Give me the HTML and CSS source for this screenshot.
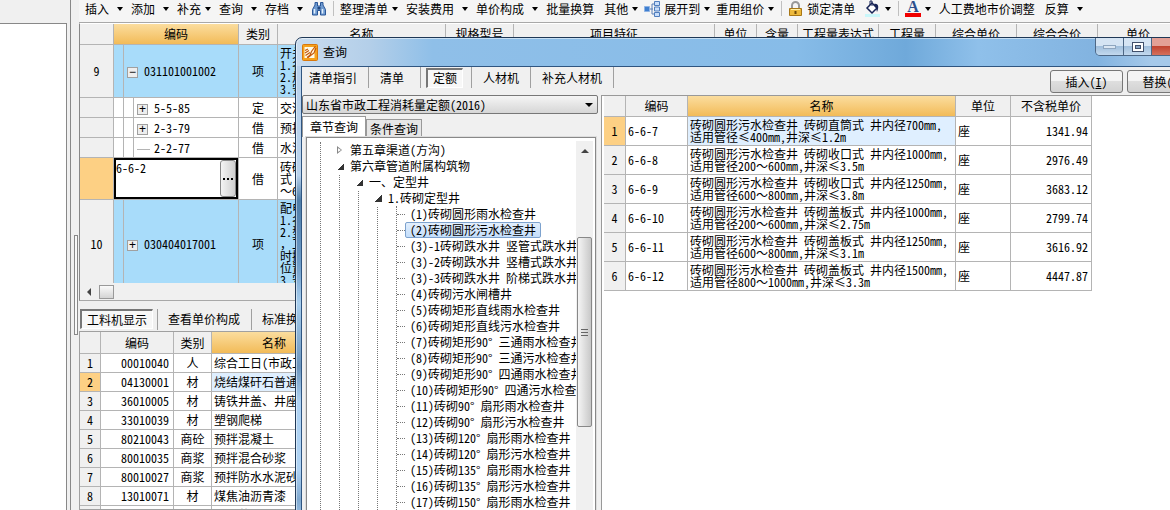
FILE: index.html
```html
<!DOCTYPE html>
<html lang="zh-CN">
<head>
<meta charset="utf-8">
<title>查询</title>
<link rel="stylesheet" href="styles.css">
</head>
<body>
<div class="app">
  <aside class="side"><div class="side-body"></div></aside>
  <div class="splitter"><span class="splitter-grip"></span></div>
  <main class="work">
    <nav class="toolbar">
      <button class="tool wide">插入</button>
      <button class="tool wide">添加</button>
      <button class="tool tight">补充</button>
      <button class="tool wide">查询</button>
      <button class="tool wide">存档</button>
      <button class="tool" aria-label="查找"><svg width="16" height="16" viewBox="0 0 16 16"><path d="M1.500 8.500L4 4V1.500h2.500V5h3V1.500H12V4l2.500 4.500V14h-5V9.500h-3V14h-5z" fill="#6f9bd1" stroke="#2b5798"/><path d="M3.500 8v4.500M11.500 8v4.500" stroke="#e2effc" stroke-width="1.500"/><path d="M6.500 6h3v2.500h-3z" fill="#24487f"/></svg></button>
      <span class="bar-line"></span>
      <button class="tool tight">整理清单</button>
      <button class="tool wide">安装费用</button>
      <button class="tool wide">单价构成</button>
      <button class="tool spaced">批量换算</button>
      <button class="tool tight snug">其他</button>
      <button class="tool tight snug"><svg width="16" height="16" viewBox="0 0 16 16"><path d="M5 8h4M8 3v10M8 3h2M8 13h2" stroke="#5a7fb5" fill="none"/><path d="M.5 5.500h5v5h-5z" fill="#3f7fd0" stroke="#8fb3e3"/><path d="M10.500.5h5v4h-5zM10.500 6h5v4h-5zM10.500 11.500h5v4h-5z" fill="#c9defa" stroke="#4f7dbd"/></svg>展开到</button>
      <button class="tool tight snug">重用组价</button>
      <span class="bar-line near"></span>
      <button class="tool spaced"><svg width="15" height="16" viewBox="0 0 15 16"><path d="M4 8V4.500a3.500 3.500 0 0 1 7 0V8" fill="none" stroke="#999" stroke-width="2"/><path d="M1.500 7.500h12v7h-12z" fill="#edb93c" stroke="#a87716"/><path d="M3 8.500h9" stroke="#fff0a8"/><path d="M7.500 10v3" stroke="#6d4908" stroke-width="2"/></svg>锁定清单</button>
      <button class="tool tight snug" aria-label="填充颜色"><svg width="16" height="18" viewBox="0 0 16 18"><path d="M0 14h15v3H0z" fill="#c9f7fa"/><path d="M2 8l5-5 5 5-5 5z" fill="#fff" stroke="#172456" stroke-width="1.500"/><path d="M5 5V1h2v5" fill="none" stroke="#172456"/><path d="M9 4c5-1 5 4 3 8l-1-4z" fill="#172456"/></svg></button>
      <span class="bar-line near"></span>
      <button class="tool tight color-a"><span>A</span></button>
      <button class="tool spaced">人工费地市价调整</button>
      <button class="tool wide">反算</button>
    </nav>

    <section class="upper">
      <table class="grid main-grid">
        <colgroup><col class="w34"><col class="w125"><col class="w39"><col class="w168"><col class="w68"><col class="w201"><col class="w42"><col class="w41"><col class="w81"><col class="w57"><col class="w81"><col class="w81"><col class="w81"></colgroup>
        <thead><tr><th></th><th class="hot">编码</th><th>类别</th><th>名称</th><th>规格型号</th><th>项目特征</th><th>单位</th><th>含量</th><th>工程量表达式</th><th>工程量</th><th>综合单价</th><th>综合合价</th><th>单价</th></tr></thead>
        <tbody>
          <tr class="item r53"><th>9</th><td class="code top"><span class="box">−</span>031101001002</td><td class="mid">项</td><td class="desc">开关<br>1.名<br>2.规<br>3.安</td><td></td><td></td><td></td><td></td><td></td><td></td><td></td><td></td><td></td></tr>
          <tr class="r20"><th></th><td class="code child"><span class="box">+</span>5-5-85</td><td class="mid">定</td><td>交流</td><td></td><td></td><td></td><td></td><td></td><td></td><td></td><td></td><td></td></tr>
          <tr class="r20"><th></th><td class="code child"><span class="box">+</span>2-3-79</td><td class="mid">借</td><td>预拌</td><td></td><td></td><td></td><td></td><td></td><td></td><td></td><td></td><td></td></tr>
          <tr class="r20"><th></th><td class="code child"><span class="dash"></span>2-2-77</td><td class="mid">借</td><td>水泥</td><td></td><td></td><td></td><td></td><td></td><td></td><td></td><td></td><td></td></tr>
          <tr class="r41"><th class="hot-row"></th><td class="edit"><div class="editor"><textarea aria-label="编码">6-6-2</textarea><button aria-label="选择"><svg width="10" height="2" viewBox="0 0 10 2"><path d="M0 0h2v2H0zM4 0h2v2H4zM8 0h2v2H8z"/></svg></button></div></td><td class="mid">借</td><td class="desc">砖砌<br>式 <br>～6</td><td></td><td></td><td></td><td></td><td></td><td></td><td></td><td></td><td></td></tr>
          <tr class="item r89"><th>10</th><td class="code last"><span class="box">+</span>030404017001</td><td class="mid">项</td><td class="desc">配电<br>1.名<br>2.型<br>，工<br>时接<br>位置<br>3.安</td><td></td><td></td><td></td><td></td><td></td><td></td><td></td><td></td><td></td></tr>
        </tbody>
      </table>
    </section>
    <div class="hscroll"><span class="arrow-left"></span><span class="hthumb"></span></div>

    <nav class="tabs lower-tabs">
      <button class="tab on">工料机显示</button><span class="sep"></span><button class="tab">查看单价构成</button><span class="sep"></span><button class="tab">标准换算</button>
    </nav>
    <section class="lower">
      <table class="grid res-grid">
        <colgroup><col class="w21"><col class="w73"><col class="w38"><col class="w125"></colgroup>
        <thead><tr><th></th><th>编码</th><th>类别</th><th class="hot">名称</th></tr></thead>
        <tbody>
          <tr><th>1</th><td class="num">00010040</td><td class="mid">人</td><td>综合工日(市政工程)</td></tr>
          <tr><th class="hot-row">2</th><td class="num">04130001</td><td class="mid">材</td><td class="sel">烧结煤矸石普通砖</td></tr>
          <tr><th>3</th><td class="num">36010005</td><td class="mid">材</td><td>铸铁井盖、井座</td></tr>
          <tr><th>4</th><td class="num">33010039</td><td class="mid">材</td><td>塑钢爬梯</td></tr>
          <tr><th>5</th><td class="num">80210043</td><td class="mid">商砼</td><td>预拌混凝土</td></tr>
          <tr><th>6</th><td class="num">80010035</td><td class="mid">商浆</td><td>预拌混合砂浆</td></tr>
          <tr><th>7</th><td class="num">80010027</td><td class="mid">商浆</td><td>预拌防水水泥砂浆</td></tr>
          <tr><th>8</th><td class="num">13010071</td><td class="mid">材</td><td>煤焦油沥青漆</td></tr>
          <tr><th></th><td class="num"></td><td class="mid">材</td><td>塑料薄膜</td></tr>
        </tbody>
      </table>
    </section>
  </main>
</div>

<div class="dialog" role="dialog" aria-labelledby="dlg-title">
  <header class="title">
    <svg width="16" height="17" viewBox="0 0 16 17"><rect x=".5" y=".5" width="15" height="16" rx="1" fill="#f6a21c" stroke="#d9780c"/><path d="M2.500 3h10v11h-10z" fill="#fffbe6"/><path d="M3 6.500l3-1.500M3 9l4-2.500M3.500 11.500L8 8.500M5 13.500l4-3M13.500 2L9.500 7.500l-2 5 4.500-3.500 2-5" stroke="#c4580c" stroke-width="1.200" fill="none"/></svg>
    <h1 id="dlg-title">查询</h1>
    <div class="win-buttons">
      <button aria-label="最小化"><svg width="13" height="6" viewBox="0 0 13 6"><rect x=".5" y="1.500" width="12" height="3" fill="#dbe7f3" stroke="#8fa6bf"/></svg></button>
      <button aria-label="最大化"><svg width="12" height="10" viewBox="0 0 12 10"><rect x=".5" y=".5" width="11" height="9" fill="#fff" stroke="#41506b"/><rect x="3.500" y="3.500" width="5" height="3" fill="#8aa6c6" stroke="#41506b"/></svg></button>
      <button class="close" aria-label="关闭"><svg width="12" height="10" viewBox="0 0 12 10"><path d="M2 1l8 8M10 1L2 9" stroke="#fff" stroke-width="2"/></svg></button>
    </div>
  </header>
  <div class="client">
    <div class="top-row">
      <nav class="tabs">
        <button class="tab">清单指引</button><span class="sep"></span><button class="tab">清单</button><span class="sep"></span><button class="tab on">定额</button><span class="sep"></span><button class="tab">人材机</button><span class="sep"></span><button class="tab">补充人材机</button><span class="sep"></span>
      </nav>
      <div class="actions"><button class="push">插入(<u>I</u>)</button><button class="push">替换(<u>R</u>)</button></div>
    </div>
    <div class="panes">
      <div class="left-pane">
        <select class="combo" aria-label="定额库"><option>山东省市政工程消耗量定额(2016)</option></select>
        <div class="page-tabs"><button class="page-tab active">章节查询</button><button class="page-tab">条件查询</button></div>
        <div class="tree-box">
          <div class="tree">
            <ul class="root"><li><ul class="level">
              <li><div class="node"><span class="twist shut"></span>第五章渠道(方沟)</div></li>
              <li><div class="node"><span class="twist open"></span>第六章管道附属构筑物</div>
                <ul class="level"><li><div class="node"><span class="twist open"></span>一、定型井</div>
                  <ul class="level"><li><div class="node"><span class="twist open"></span>1.砖砌定型井</div>
                    <ul class="leaves">
                      <li><span>(1)砖砌圆形雨水检查井</span></li>
                      <li><span class="picked">(2)砖砌圆形污水检查井</span></li>
                      <li><span>(3)-1砖砌跌水井 竖管式跌水井</span></li>
                      <li><span>(3)-2砖砌跌水井 竖槽式跌水井</span></li>
                      <li><span>(3)-3砖砌跌水井 阶梯式跌水井</span></li>
                      <li><span>(4)砖砌污水闸槽井</span></li>
                      <li><span>(5)砖砌矩形直线雨水检查井</span></li>
                      <li><span>(6)砖砌矩形直线污水检查井</span></li>
                      <li><span>(7)砖砌矩形90° 三通雨水检查井</span></li>
                      <li><span>(8)砖砌矩形90° 三通污水检查井</span></li>
                      <li><span>(9)砖砌矩形90° 四通雨水检查井</span></li>
                      <li><span>(10)砖砌矩形90° 四通污水检查井</span></li>
                      <li><span>(11)砖砌90° 扇形雨水检查井</span></li>
                      <li><span>(12)砖砌90° 扇形污水检查井</span></li>
                      <li><span>(13)砖砌120° 扇形雨水检查井</span></li>
                      <li><span>(14)砖砌120° 扇形污水检查井</span></li>
                      <li><span>(15)砖砌135° 扇形雨水检查井</span></li>
                      <li><span>(16)砖砌135° 扇形污水检查井</span></li>
                      <li><span>(17)砖砌150° 扇形雨水检查井</span></li>
                      <li><span>(18)砖砌150° 扇形污水检查井</span></li>
                    </ul></li></ul></li></ul></li>
            </ul></li></ul>
          </div>
          <div class="vscroll"><span class="arrow-up"></span><span class="vthumb"><i></i></span></div>
        </div>
      </div>
      <div class="right-pane">
        <table class="grid quota">
          <colgroup><col class="w22"><col class="w62"><col class="w268"><col class="w55"><col class="w81"></colgroup>
          <thead><tr><th></th><th>编码</th><th class="hot">名称</th><th>单位</th><th>不含税单价</th></tr></thead>
          <tbody>
            <tr><th class="hot-row">1</th><td>6-6-7</td><td class="desc sel">砖砌圆形污水检查井 砖砌直筒式 井内径700mm,<br>适用管径≤400mm,井深≤1.2m</td><td>座</td><td class="price">1341.94</td></tr>
            <tr><th>2</th><td>6-6-8</td><td class="desc">砖砌圆形污水检查井 砖砌收口式 井内径1000mm,<br>适用管径200～600mm,井深≤3.5m</td><td>座</td><td class="price">2976.49</td></tr>
            <tr><th>3</th><td>6-6-9</td><td class="desc">砖砌圆形污水检查井 砖砌收口式 井内径1250mm,<br>适用管径600～800mm,井深≤3.8m</td><td>座</td><td class="price">3683.12</td></tr>
            <tr><th>4</th><td>6-6-10</td><td class="desc">砖砌圆形污水检查井 砖砌盖板式 井内径1000mm,<br>适用管径200～600mm,井深≤2.75m</td><td>座</td><td class="price">2799.74</td></tr>
            <tr><th>5</th><td>6-6-11</td><td class="desc">砖砌圆形污水检查井 砖砌盖板式 井内径1250mm,<br>适用管径600～800mm,井深≤3.1m</td><td>座</td><td class="price">3616.92</td></tr>
            <tr><th>6</th><td>6-6-12</td><td class="desc">砖砌圆形污水检查井 砖砌盖板式 井内径1500mm,<br>适用管径800～1000mm,井深≤3.3m</td><td>座</td><td class="price">4447.87</td></tr>
          </tbody>
        </table>
      </div>
    </div>
  </div>
</div>
</body>
</html>
```
FILE: styles.css
```css
* { box-sizing: border-box; }
body {
  margin: 0;
  height: 100vh;
  overflow: hidden;
  position: relative;
  background: #f0f0f0;
  color: #000;
  font: 12px/16px "Noto Sans Mono CJK SC", "Noto Sans CJK SC", monospace;
}
button, select, textarea { font: inherit; color: inherit; margin: 0; padding: 0; border: 0; background: none; }
ul { list-style: none; margin: 0; padding: 0; }

.app { display: flex; height: 100%; }
.side { width: 67px; flex: none; padding-top: 23px; }
.side-body { height: 100%; background: #fff; border-top: 1px solid #888; border-right: 1px solid #888; }
.splitter { width: 9px; flex: none; margin-left: 3px; border-left: 1px solid #888; display: flex; padding: 235px 0 0 3px; }
.splitter-grip { width: 4px; height: 100px; border: 1px solid #888; background: #f8f8f8; }
.work { flex: 1; min-width: 0; display: flex; flex-direction: column; }

.toolbar { height: 23px; flex: none; display: flex; align-items: center; padding: 0 0 5px 6px; white-space: nowrap; background: #f5f5f5; border-bottom: 1px solid #a8a8a8; }
.tool { display: flex; align-items: center; gap: 4px; flex: none; height: 18px; }
.tool.wide::after, .tool.tight::after { content: ""; border: 3px solid transparent; border-top: 4px solid #000; border-bottom: 0; margin: 0 8px 0 4px; }
.tool.tight::after { margin-left: 0; }
.tool.snug::after { margin-right: 6px; }
.tool.spaced { margin-right: 10px; }
.bar-line { width: 1px; height: 15px; background: #c0c0c0; margin: 0 6px; flex: none; }
.bar-line.near { margin-left: 1px; }
.color-a span { font: bold 16px/13px "Liberation Serif", serif; color: #2d4f8e; border-bottom: 4px solid #f00000; padding: 0 2px; height: 17px; }

.grid { table-layout: fixed; border-collapse: separate; border-spacing: 0; width: 0; background: #fff; }
.grid th, .grid td { padding: 0 2px; border-right: 1px solid #b4b4b4; border-bottom: 1px solid #b4b4b4; font-weight: normal; overflow: hidden; white-space: nowrap; line-height: 16px; }
.grid th { background: #f0f0f0; text-align: center; }
.grid td { text-align: left; }
.grid th.hot { background: linear-gradient(#fbdd9e, #f2bb58); }
.grid th.hot-row { background: #fdd084; }
.grid .mid { text-align: center; }
.grid .num, .grid .price { text-align: right; }
.grid .num { padding-right: 4px; }
.grid td.desc { line-height: 12px; }
.grid td.sel { background: #dfefff; }

.upper { height: 260px; flex: none; overflow: hidden; border-left: 1px solid #888; border-top: 1px solid #fff; }
.main-grid thead tr { height: 21px; }
.main-grid .item td { background-color: #a8dcfa; }
.main-grid .item .desc { vertical-align: top; padding-top: 2px; }
.r53 { height: 53px; } .r20 { height: 20px; } .r41 { height: 41px; } .r89 { height: 89px; }
.grid td.code { background-image: linear-gradient(#b4b4b4, #b4b4b4); background-size: 1px 100%; background-repeat: no-repeat; background-position: 9px 0; padding-left: 13px; }
.grid td.code.child { background-image: linear-gradient(#b4b4b4, #b4b4b4), linear-gradient(#b4b4b4, #b4b4b4); background-position: 9px 0, 19px 0; padding-left: 23px; }
.box { display: inline-block; width: 11px; height: 11px; margin-right: 6px; border: 1px solid #a0a0a0; background: #eee; line-height: 9px; text-align: center; vertical-align: middle; font-family: "Liberation Sans", sans-serif; }
.dash { display: inline-block; width: 13px; height: 1px; margin-right: 4px; background: #b4b4b4; vertical-align: middle; }
.grid td.edit { padding: 0; }
.editor { display: flex; height: 41px; border: 2px solid #000; background: #fff; }
.editor textarea { flex: 1; min-width: 0; resize: none; overflow: hidden; outline: 0; }
.editor button { width: 16px; flex: none; display: flex; align-items: center; justify-content: center; border: 1px solid #888; border-radius: 3px; background: linear-gradient(90deg, #f4f4f4, #cfcfcf); }
.hscroll { height: 18px; flex: none; display: flex; align-items: center; gap: 8px; padding-left: 7px; border-left: 1px solid #888; border-bottom: 1px solid #a8a8a8; background: #f0f0f0; }
.arrow-left { border: 4px solid transparent; border-right-color: #444; border-left: 0; }
.hthumb { width: 15px; height: 14px; border: 1px solid #999; background: linear-gradient(#fafafa, #d4d4d4); }

.tabs { display: flex; align-items: center; }
.tab { padding: 0 11px; height: 21px; white-space: nowrap; }
.sep { width: 1px; height: 21px; background: #a0a0a0; }
.tab.on { border: 1px solid #fff; border-top: 2px solid #777; border-left: 2px solid #777; background: #f7f7f7; padding: 0 5px; height: 20px; margin: 0 8px 0 5px; }
.lower-tabs { height: 30px; flex: none; padding-top: 6px; }
.lower-tabs .tab.on { margin: 0 4px 0 1px; }
.lower-tabs .tab { padding-left: 10px; }
.lower-tabs .tab.on { padding-left: 5px; }
.lower { flex: 1; min-height: 0; overflow: hidden; border: 1px solid #a0a0a0; border-right: 0; }
.res-grid thead tr { height: 22px; }
.res-grid tbody tr { height: 19px; }

.w21 { width: 21px; } .w22 { width: 22px; } .w34 { width: 34px; } .w38 { width: 38px; } .w39 { width: 39px; }
.w41 { width: 41px; } .w42 { width: 42px; } .w55 { width: 55px; } .w57 { width: 57px; } .w62 { width: 62px; }
.w68 { width: 68px; } .w73 { width: 73px; } .w81 { width: 81px; } .w125 { width: 125px; } .w168 { width: 168px; }
.w201 { width: 201px; } .w268 { width: 268px; }

.dialog {
  position: absolute;
  left: 295px;
  top: 37px;
  right: -37px;
  bottom: -20px;
  display: flex;
  flex-direction: column;
  border: 1px solid #1f3856;
  border-radius: 7px;
  padding: 0 5px;
  background:
    linear-gradient(90deg, #c9dcef 0, #b4cfe9 8%, #8fbfe8 15%, #87bce8 55%, #6fa9da 67%, #8fc0ea 75%, #82b3e0 88%, #a5c9ea 94%) 0 0 / 100% 28px no-repeat,
    linear-gradient(#b9d2ec 0, #b9d2ec 28%, #4f7da8 33%, #6d9cc8 46%, #a8ceee 54%, #6c95bd 67%, #aed2f3 74%, #aed2f3 88%, #7fa8cf 94%, #aed2f3);
  box-shadow: inset 0 0 0 1px rgba(255, 255, 255, .5);
}
.title { height: 28px; flex: none; display: flex; align-items: center; gap: 5px; padding-left: 1px; }
.title h1 { font: inherit; margin: 0; flex: 1; }
.win-buttons { display: flex; align-self: flex-start; height: 18px; border: 1px solid #4d6785; border-top: 0; border-radius: 0 0 5px 5px; overflow: hidden; }
.win-buttons button { width: 28px; border-right: 1px solid #4d6785; background: linear-gradient(#d5e4f3 45%, #a1bfdc 50%, #c3d9ee); display: flex; align-items: center; justify-content: center; }
.win-buttons .close { width: 48px; border: 0; background: linear-gradient(#e3a096 45%, #c14431 50%, #d5705c); }
.client { flex: 1; min-height: 0; display: flex; flex-direction: column; border: 1px solid #2f5580; border-bottom: 0; background: #f0f0f0; }
.top-row { height: 28px; flex: none; display: flex; justify-content: space-between; align-items: flex-start; }
.top-row .tab:first-child { padding-left: 7px; }
.top-row .sep + .tab:nth-child(3) { padding-right: 16px; }
.actions { display: flex; gap: 4px; padding-top: 3px; }
.push { width: 73px; height: 23px; border: 1px solid #777; border-radius: 3px; background: linear-gradient(#f4f4f4 45%, #dedede 50%, #d2d2d2); }
.panes { flex: 1; min-height: 0; display: flex; }
.left-pane { position: relative; width: 299px; flex: none; display: flex; flex-direction: column; padding-right: 3px; }
.left-pane::after { content: ""; position: absolute; right: 8px; top: 8px; border: 4px solid transparent; border-top-color: #000; border-bottom: 0; pointer-events: none; }
.combo { height: 19px; flex: none; border: 1px solid #777; border-radius: 2px; appearance: none; padding-left: 3px; line-height: 16px; background: linear-gradient(#f5f5f5, #d6d6d6); }
.page-tabs { display: flex; align-items: flex-end; height: 23px; flex: none; }
.page-tab { height: 18px; padding: 0 3px; border: 1px solid #999; border-bottom: 0; background: #e6e6e6; white-space: nowrap; }
.page-tab.active { height: 21px; padding: 0 7px; background: #fff; }
.tree-box { flex: 1; min-height: 0; display: flex; margin: 0 2px 0 4px; padding: 3px 2px 0 1px; border: 1px solid #888; border-bottom: 0; background: #fff; outline: 1px solid #ddd; }
.tree { flex: 1; min-width: 0; overflow: hidden; padding: 1px 0 0 12px; white-space: nowrap; }
.root, .level, .leaves { border-left: 1px dotted #777; }
.level, .leaves { margin-left: 18px; }
.node { display: flex; align-items: center; height: 16px; margin-left: -6px; background: #fff; }
.twist { width: 7px; margin: 0 6px 0 3px; }
.twist.open { height: 7px; background: linear-gradient(135deg, transparent 50%, #333 50%); }
.twist.shut { height: 8px; background: #888; clip-path: polygon(0 0, 5px 50%, 0 100%, 0 80%, 4px 50%, 0 20%, 1px 20%, 1px 80%, 0 80%); }
.leaves li { display: flex; align-items: center; height: 16px; }
.leaves li::before { content: ""; width: 8px; border-top: 1px dotted #777; flex: none; }
.leaves li span { padding: 0 4px; border: 1px solid transparent; line-height: 14px; height: 16px; }
.leaves li .picked { border-color: #7da2ce; border-radius: 2px; background: linear-gradient(#e2effd, #c4defb); }
.vscroll { width: 17px; flex: none; background: #f0f0f0; display: flex; flex-direction: column; align-items: center; }
.arrow-up { border: 4px solid transparent; border-bottom-color: #444; border-top: 0; margin: 8px 0 84px; }
.vthumb { width: 15px; height: 190px; flex: none; border: 1px solid #888; border-radius: 2px; background: linear-gradient(90deg, #f5f5f5, #c8c8c8); display: flex; align-items: center; justify-content: center; }
.vthumb i { width: 7px; height: 7px; background: repeating-linear-gradient(#666 0 1px, transparent 1px 3px); }
.right-pane { flex: 1; min-width: 0; background: #fff; border-left: 1px solid #999; border-top: 1px solid #999; padding-left: 2px; }
.quota thead tr { height: 21px; }
.quota tbody tr { height: 29px; }
.grid.quota .price { padding-right: 3px; }
```
